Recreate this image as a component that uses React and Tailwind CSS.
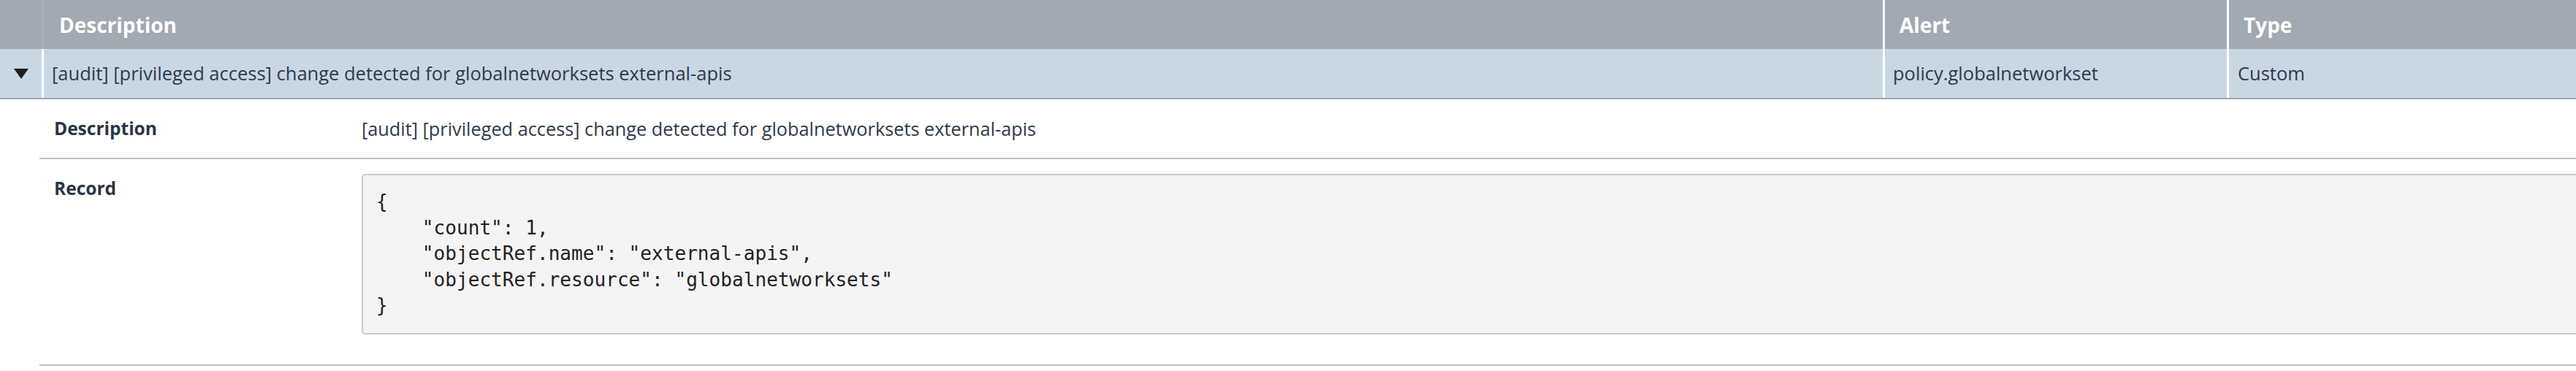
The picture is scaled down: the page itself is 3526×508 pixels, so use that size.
import React from "react";

const codeLines = [
  "{",
  '    "count": 1,',
  '    "objectRef.name": "external-apis",',
  '    "objectRef.resource": "globalnetworksets"',
  "}",
];

export default function App() {
  return (
    <div
      className="w-[3526px] h-[508px] overflow-hidden bg-white text-[#2d3a4b]"
      style={{ fontFamily: '"Open Sans", "Noto Sans", sans-serif' }}
    >
      <div className="w-[3700px]">
        {/* Header */}
        <div className="flex h-[67px] bg-[#a2a9b3] text-white font-bold text-[28px]">
          <div className="w-[60px] shrink-0 border-r-[3px] border-[#aab0b9]" />
          <div className="w-[2520px] shrink-0 flex items-center pl-[21px] border-r-[3px] border-white">
            Description
          </div>
          <div className="w-[471px] shrink-0 flex items-center pl-[20px] border-r-[3px] border-white">
            Alert
          </div>
          <div className="flex-1 flex items-center pl-[20px]">Type</div>
        </div>

        {/* Row */}
        <div className="flex h-[69px] bg-[#c9d7e3] border-b-2 border-[#a2a9b3] text-[25.5px]">
          <div className="w-[60px] shrink-0 flex items-center justify-center border-r-[3px] border-white">
            <svg width="20" height="14" viewBox="0 0 20 14">
              <polygon points="0,0 20,0 10,14" fill="#1f1f1f" />
            </svg>
          </div>
          <div className="w-[2520px] shrink-0 flex items-center pl-[11px] border-r-[3px] border-white">
            [audit] [privileged access] change detected for globalnetworksets external-apis
          </div>
          <div className="w-[471px] shrink-0 flex items-center pl-[11px] border-r-[3px] border-white">
            policy.globalnetworkset
          </div>
          <div className="flex-1 flex items-center pl-[12px]">Custom</div>
        </div>

        {/* Details */}
        <div className="ml-[54px]">
          <div className="flex py-[20px] border-b-2 border-[#c0c0c0]">
            <div className="w-[441px] shrink-0 pl-[20px] font-bold text-[24.5px] leading-[40px] text-[#2a3444]">
              Description
            </div>
            <div className="text-[25.3px] leading-[40px]">
              [audit] [privileged access] change detected for globalnetworksets external-apis
            </div>
          </div>
          <div className="flex pt-[20px] pb-[41px] border-b-2 border-[#c0c0c0]">
            <div className="w-[441px] shrink-0 pl-[20px] font-bold text-[24.5px] leading-[40px] text-[#2a3444]">
              Record
            </div>
            <div className="w-[3200px] shrink-0 bg-[#f4f4f4] border-2 border-[#cccccc] rounded-[5px] py-[19px] pl-[18px]">
              <pre
                className="m-0 text-[26.1px] leading-[35.5px] text-[#222222]"
                style={{ fontFamily: '"DejaVu Sans Mono", monospace' }}
              >
                {codeLines.join("\n")}
              </pre>
            </div>
          </div>
        </div>
      </div>
    </div>
  );
}
